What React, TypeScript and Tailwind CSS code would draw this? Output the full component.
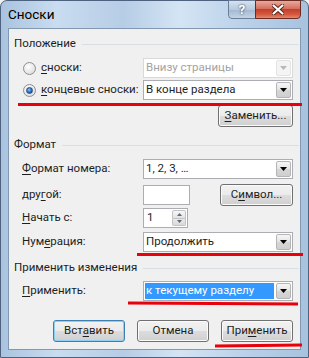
import React from "react";

// access-key letter
function U({ children }: { children: React.ReactNode }) {
  return <span className="underline underline-offset-[2px] decoration-[1px]">{children}</span>;
}

function Arrow({ disabled }: { disabled?: boolean }) {
  return (
    <svg width="7" height="4" viewBox="0 0 7 4">
      <path d="M0 0H7L3.5 4Z" fill={disabled ? "#b8b8b8" : "#000"} />
    </svg>
  );
}

function Combo({
  text,
  disabled,
  selected,
}: {
  text: string;
  disabled?: boolean;
  selected?: boolean;
}) {
  return (
    <div
      className={`flex h-[20px] w-[150px] border ${
        disabled ? "border-[#d9d9d9]" : "border-[#abadb3]"
      } bg-white`}
    >
      <div className="flex flex-1 items-center p-[1px]">
        <div
          className={`flex h-full flex-1 items-center pl-[1px] ${
            selected ? "bg-[#3399ff] text-white" : disabled ? "text-[#a3a3a3]" : "text-[#1e1e1e]"
          }`}
        >
          {text}
        </div>
      </div>
      <div
        className={`m-[1px] flex w-[15px] items-center justify-center rounded-[2px] border ${
          disabled
            ? "border-[#e3e3e3] bg-[#f4f4f4]"
            : "border-[#b5b5b5] bg-[linear-gradient(#f6f6f6,#e4e4e4_50%,#d6d6d6_51%,#cfcfcf)]"
        }`}
      >
        <Arrow disabled={disabled} />
      </div>
    </div>
  );
}

function Btn({ children, def, w = "w-[72px]" }: { children: React.ReactNode; def?: boolean; w?: string }) {
  return (
    <div
      className={`flex h-[22px] ${w} items-center justify-center rounded-[3px] border ${
        def
          ? "border-[#3c7fb1] shadow-[inset_0_0_0_1px_#8ed0f5]"
          : "border-[#707070] shadow-[inset_0_0_0_1px_#fbfbfb]"
      } bg-[linear-gradient(#f2f2f2,#ebebeb_48%,#dddddd_50%,#cfcfcf)] text-[#1e1e1e]`}
    >
      {children}
    </div>
  );
}

function Radio({ checked }: { checked?: boolean }) {
  return (
    <div className="flex h-[13px] w-[13px] items-center justify-center rounded-full border border-[#8e8f8f] bg-[radial-gradient(circle_at_40%_35%,#ffffff,#e6e6e6_60%,#cfcfcf)]">
      {checked && (
        <div className="h-[7px] w-[7px] rounded-full border border-[#1d4a8a] bg-[radial-gradient(circle_at_40%_35%,#8cc3f5,#2a6fc0_55%,#0c3470)]" />
      )}
    </div>
  );
}

function GroupHead({ title, mt }: { title: string; mt: string }) {
  return (
    <div className={`flex h-[16px] items-center ${mt} -mr-[6px]`}>
      <span className="text-[#1e1e1e]">{title}</span>
      <div className="ml-[6px] h-px flex-1 bg-[#d5dfe5]" />
    </div>
  );
}

function Label({ children }: { children: React.ReactNode }) {
  return <div className="flex w-[129px] items-center pl-[8px] text-[#1e1e1e]">{children}</div>;
}

export default function App() {
  return (
    <div className="relative h-[358px] w-[309px] overflow-hidden bg-[#f0f0f0] font-['Segoe_UI',Roboto,'Noto_Sans',sans-serif] text-[11.5px] leading-none">
      {/* glass frame */}
      <div className="flex h-full w-full flex-col rounded-t-[7px] border border-[#4e6280] bg-[linear-gradient(90deg,#a9c3df_0%,#c9dcf0_18%,#b6cde6_40%,#d4e4f4_58%,#bcd2ea_78%,#a8c2de_100%)]">
        {/* title bar */}
        <div className="relative flex h-[27px] items-center pl-[7px]">
          <span className="text-[13.5px] text-[#000]">Сноски</span>
          <div className="absolute right-[7px] top-[-1px] flex">
            <div className="flex h-[19px] w-[28px] items-center justify-center rounded-bl-[4px] border border-[#6d7f98] bg-[linear-gradient(#d5e2f0,#b7c9dd_50%,#a2b7cf_51%,#c3d4e6)]">
              <span className="text-[13px] font-bold text-white drop-shadow-[0_0_1px_#2b3a4f]">?</span>
            </div>
            <div className="-ml-px flex h-[19px] w-[46px] items-center justify-center rounded-br-[4px] border border-[#6b2a22] bg-[linear-gradient(#e9a99c,#d4705f_45%,#c2402c_50%,#d65a3f_80%,#e48a6d)]">
              <svg width="12" height="11" viewBox="0 0 12 11">
                <path
                  d="M1.5 1.5L10.5 9.5M10.5 1.5L1.5 9.5"
                  stroke="#5a2418"
                  strokeWidth="4"
                  strokeLinecap="round"
                />
                <path
                  d="M1.5 1.5L10.5 9.5M10.5 1.5L1.5 9.5"
                  stroke="#fff"
                  strokeWidth="2.2"
                  strokeLinecap="round"
                />
              </svg>
            </div>
          </div>
        </div>

        {/* client area */}
        <div className="mx-[7px] h-[322px] border border-[#8297b0] bg-[#f0f0f0]">
          <div className="flex flex-col pl-[5px] pr-[7px]">
            <GroupHead title="Положение" mt="mt-[7px]" />
            <div className="mt-[6px] flex h-[20px]">
              <div className="flex w-[129px] items-center pl-[9px] text-[#1e1e1e]">
                <Radio />
                <span className="ml-[5px]">
                  <U>с</U>носки:
                </span>
              </div>
              <Combo text="Внизу страницы" disabled />
            </div>
            <div className="mt-[2px] flex h-[20px]">
              <div className="flex w-[129px] items-center pl-[9px] text-[#1e1e1e]">
                <Radio checked />
                <span className="ml-[5px]">
                  <U>к</U>онцевые сноски:
                </span>
              </div>
              <Combo text="В конце раздела" />
            </div>
            <div className="mt-[5px] flex justify-end">
              <Btn w="w-[75px]">
                <span>
                  <U>З</U>аменить...
                </span>
              </Btn>
            </div>

            <GroupHead title="Формат" mt="mt-[10px]" />
            <div className="mt-[6px] flex h-[20px]">
              <Label>
                <U>Ф</U>ормат номера:
              </Label>
              <Combo text="1, 2, 3, …" />
            </div>
            <div className="mt-[5px] flex h-[21px] items-center">
              <Label>
                дру<U>г</U>ой:
              </Label>
              <div className="h-[20px] w-[47px] border border-[#abadb3] bg-white" />
              <div className="ml-auto">
                <Btn w="w-[73px]">
                  <span>
                    С<U>и</U>мвол...
                  </span>
                </Btn>
              </div>
            </div>
            <div className="mt-[3px] flex h-[20px]">
              <Label>
                <U>Н</U>ачать с:
              </Label>
              <div className="flex h-[20px] w-[45px] border border-[#abadb3] bg-white">
                <div className="flex flex-1 items-center pl-[3px] text-[#1e1e1e]">1</div>
                <div className="m-[1px] flex w-[14px] flex-col">
                  <div className="flex flex-1 items-center justify-center rounded-t-[2px] border border-[#c3c3c3] bg-[linear-gradient(#f7f7f7,#e3e3e3)]">
                    <svg width="5" height="3" viewBox="0 0 5 3">
                      <path d="M0 3H5L2.5 0Z" fill="#5a6a80" />
                    </svg>
                  </div>
                  <div className="flex flex-1 items-center justify-center rounded-b-[2px] border border-t-0 border-[#c3c3c3] bg-[linear-gradient(#e9e9e9,#d9d9d9)]">
                    <svg width="5" height="3" viewBox="0 0 5 3">
                      <path d="M0 0H5L2.5 3Z" fill="#5a6a80" />
                    </svg>
                  </div>
                </div>
              </div>
            </div>
            <div className="mt-[4px] flex h-[20px]">
              <Label>
                Нум<U>е</U>рация:
              </Label>
              <Combo text="Продолжить" />
            </div>

            <GroupHead title="Применить изменения" mt="mt-[8px]" />
            <div className="mt-[5px] flex h-[20px]">
              <Label>
                <span>
                  <U>П</U>рименить:
                </span>
              </Label>
              <Combo text="к текущему разделу" selected />
            </div>

            <div className="mt-[19px] flex justify-end gap-[12px]">
              <Btn def>
                <span>
                  Вст<U>а</U>вить
                </span>
              </Btn>
              <Btn>Отмена</Btn>
              <Btn>
                <span>
                  При<U>м</U>енить
                </span>
              </Btn>
            </div>
          </div>
        </div>
      </div>

      {/* red annotation strokes */}
      <div className="absolute left-[18px] top-[103px] h-[3px] w-[284px] bg-[#e8000b]" />
      <div className="absolute left-[137px] top-[253px] h-[3px] w-[166px] bg-[#e8000b]" />
      <div className="absolute left-[128px] top-[302px] h-[3px] w-[170px] rotate-[0.3deg] bg-[#e8000b]" />
      <div className="absolute left-[215px] top-[344px] h-[3px] w-[87px] -rotate-[0.6deg] bg-[#e8000b]" />
    </div>
  );
}
